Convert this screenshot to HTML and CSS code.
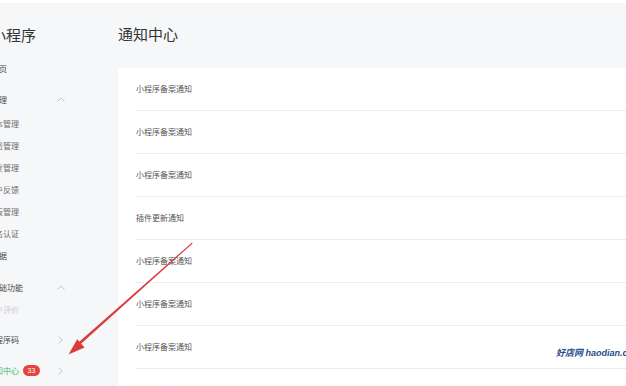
FILE: index.html
```html
<!DOCTYPE html>
<html lang="zh-CN">
<head>
<meta charset="utf-8">
<title>通知中心</title>
<link rel="stylesheet" href="styles.css">
</head>
<body>
<div class="topbar"></div>
<div class="layout">
  <aside class="sidebar">
    <div class="brand">小程序</div>
    <div class="nav-item home">首页</div>
    <div class="nav-group"><span>管理</span><svg class="chev-up" width="8" height="5" viewBox="0 0 8 5"><path d="M0.5 4.5 L4 1 L7.5 4.5" fill="none" stroke="#bbb" stroke-width="0.9"/></svg></div>
    <div class="nav-sub">版本管理</div>
    <div class="nav-sub">成员管理</div>
    <div class="nav-sub">开发管理</div>
    <div class="nav-sub">用户反馈</div>
    <div class="nav-sub">模板管理</div>
    <div class="nav-sub">实名认证</div>
    <div class="nav-item data">数据</div>
    <div class="nav-group second"><span>基础功能</span><svg class="chev-up" width="8" height="5" viewBox="0 0 8 5"><path d="M0.5 4.5 L4 1 L7.5 4.5" fill="none" stroke="#bbb" stroke-width="0.9"/></svg></div>
    <div class="nav-sub disabled">用户评价</div>
    <div class="nav-link code"><span>小程序码</span><svg class="chev-right" width="5" height="8" viewBox="0 0 5 8"><path d="M0.8 0.5 L4.2 4 L0.8 7.5" fill="none" stroke="#bbb" stroke-width="0.9"/></svg></div>
    <div class="nav-link active"><span class="label">通知中心</span><span class="badge">33</span><svg class="chev-right" width="5" height="8" viewBox="0 0 5 8"><path d="M0.8 0.5 L4.2 4 L0.8 7.5" fill="none" stroke="#bbb" stroke-width="0.9"/></svg></div>
  </aside>
  <main class="main">
    <h1 class="page-title">通知中心</h1>
    <section class="card">
      <div class="row">小程序备案通知</div>
      <div class="row">小程序备案通知</div>
      <div class="row">小程序备案通知</div>
      <div class="row">插件更新通知</div>
      <div class="row">小程序备案通知</div>
      <div class="row">小程序备案通知</div>
      <div class="row">小程序备案通知</div>
      <div class="row">小程序备案通知</div>
    </section>
  </main>
</div>
<div class="watermark">好店网 haodian.com</div>
<svg class="annotation" width="626" height="386" viewBox="0 0 626 386">
  <polygon points="192,242.6 192.6,243.4 80.2,344.6 78.4,342.4" fill="#dc3b3b"/>
  <polygon points="68.5,354.5 77.2,339.2 84.6,347.4" fill="#dc3b3b"/>
</svg>
</body>
</html>
```
FILE: styles.css
```css
* { box-sizing: border-box; }
html, body {
  margin: 0;
  padding: 0;
  width: 626px;
  height: 386px;
  overflow: hidden;
  background: #f6f7f9;
  font-family: "Noto Sans CJK SC", "Noto Sans", sans-serif;
  color: #444;
}
.topbar {
  height: 3px;
  background: #ffffff;
}
.layout {
  display: flex;
  height: 383px;
}
.sidebar {
  width: 96px;
  flex: none;
  display: flex;
  flex-direction: column;
  padding-top: 15px;
  padding-right: 30px;
  color: #555;
}
.sidebar > div {
  display: flex;
  align-items: center;
  font-size: 8px;
  white-space: nowrap;
}
.brand {
  height: 34px;
  margin-left: -9px;
  font-size: 15px !important;
  color: #333;
}
.nav-item {
  margin-left: -9px;
  height: 22px;
  color: #4a4a4a;
}
.nav-item.home { height: 34px; }
.nav-group {
  margin-left: -9px;
  height: 27px;
  color: #4a4a4a;
}
.nav-group.second {
  height: 22px;
  margin-top: 10px;
}
.chev-up {
  margin-left: auto;
  margin-right: 1px;
}
.nav-sub {
  margin-left: -13px;
  height: 22px;
  color: #6a6a6a;
}
.nav-sub.disabled { color: #cccccc; }
.nav-link {
  margin-left: -13px;
  height: 31px;
  color: #4a4a4a;
}
.nav-link.code { margin-top: 4px; }
.chev-right {
  margin-left: auto;
  margin-right: 3px;
}
.nav-link.active .label { color: #3cb56a; }
.badge {
  margin-left: 4px;
  height: 11px;
  min-width: 17px;
  padding: 0 4px;
  border-radius: 6px;
  background: #e5443c;
  color: #fff;
  font-family: "Liberation Sans", sans-serif;
  font-size: 7px;
  line-height: 11px;
  text-align: center;
}
.main {
  flex: 1;
  display: flex;
  flex-direction: column;
  padding-left: 22px;
  min-width: 0;
}
.page-title {
  margin: 0;
  height: 65px;
  padding-bottom: 5px;
  display: flex;
  align-items: center;
  font-size: 15px;
  font-weight: normal;
  color: #333;
}
.card {
  background: #ffffff;
  flex: 1;
  margin-right: -20px;
  overflow: hidden;
}
.row {
  margin-left: 18px;
  height: 43px;
  padding-bottom: 2px;
  border-bottom: 1px solid #ececec;
  display: flex;
  align-items: center;
  font-size: 8px;
  color: #555;
}
.watermark {
  position: absolute;
  left: 556px;
  top: 346px;
  white-space: nowrap;
  font-family: "Liberation Sans", "Noto Sans CJK SC", sans-serif;
  font-size: 9px;
  font-weight: bold;
  font-style: italic;
  color: #1f4f8b;
}
.annotation {
  position: absolute;
  left: 0;
  top: 0;
  pointer-events: none;
}
```
